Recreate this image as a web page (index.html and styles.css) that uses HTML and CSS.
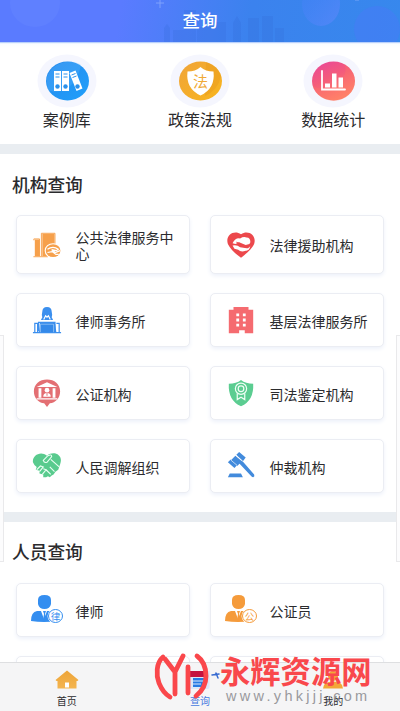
FILE: index.html
```html
<!DOCTYPE html>
<html lang="zh-CN">
<head>
<meta charset="utf-8">
<title>查询</title>
<link rel="stylesheet" href="styles.css">
</head>
<body>
<div class="app">
  <header class="header">
    <svg class="header-art" viewBox="0 0 400 42" preserveAspectRatio="none">
      <defs>
        <linearGradient id="bubble" x1="0" y1="0" x2="1" y2="1"><stop offset="0" stop-color="#477fff" stop-opacity=".2"/><stop offset="1" stop-color="#5f88fb" stop-opacity=".65"/></linearGradient>
      </defs>
      <ellipse cx="35" cy="3" rx="25" ry="24" fill="#7491ff" opacity=".22"/>
      <ellipse cx="321" cy="4" rx="19" ry="22" fill="url(#bubble)"/>
      <ellipse cx="377" cy="29" rx="23" ry="23" fill="#4779f7" opacity=".5"/>
      <path d="M156 3h8M160 0v8M355 0h4" stroke="#9db9ff" opacity=".6"/>
      <path d="M164 42V28l3-4 3 4v14M173 42V30h11V10h12v32M197 42V27h9v-5h20v20M233 42V23l4-7 4 7v19M248 42V18h11v24M262 42V16h11v26M275 42V28h9v14" fill="#3469d8" opacity=".22"/>
    </svg>
    <h1>查询</h1>
  </header>

  <main class="content">
    <nav class="shortcuts">
      <div class="shortcut">
        <svg width="60" height="54" viewBox="0 0 60 54">
          <defs><linearGradient id="blue" x1="0" y1="0" x2="1" y2="1"><stop offset="0" stop-color="#2589ec"/><stop offset="1" stop-color="#20a0fb"/></linearGradient></defs>
          <ellipse cx="30" cy="27" rx="29.5" ry="26.5" fill="#f5f6fe"/>
          <ellipse cx="30.500" cy="27" rx="21.500" ry="19.500" fill="url(#blue)"/>
          <path d="M11 36C20 40 38 38 44 11 34 4 13 8 9.500 25z" fill="#65b9ff" opacity=".3"/>
          <path d="M17 17h7v20h-7zM25 17h7v20h-7zM32.500 19l6-2.500 7 18-6 2.500z" fill="#fff"/>
          <path d="M18.500 20h4m-4 3h4M26.500 20h4m-4 3h4M34.500 21l4-1.500m-3 4l4-1.500" stroke="#2b91eb" stroke-width="1"/>
          <circle cx="20.500" cy="32.500" r="2.200" fill="#2b91eb"/><circle cx="28.500" cy="32.500" r="2.200" fill="#2b91eb"/><circle cx="40.500" cy="32.500" r="2.200" fill="#2b91eb"/>
        </svg>
        <span>案例库</span>
      </div>
      <div class="shortcut">
        <svg width="60" height="54" viewBox="0 0 60 54">
          <defs><linearGradient id="gold" x1="0" y1="0" x2="1" y2="1"><stop offset="0" stop-color="#f0a43a"/><stop offset="1" stop-color="#f8b51c"/></linearGradient></defs>
          <ellipse cx="30" cy="27" rx="29.500" ry="26.500" fill="#f5f6fe"/>
          <ellipse cx="30.500" cy="27" rx="21.500" ry="19.500" fill="url(#gold)"/>
          <path d="M36 8q12 4 15 14-3 14-16 20z" fill="#e99b1c" opacity=".5"/>
          <path d="M30.500 13q5 4.500 13 4.500 2 17-13 24-15-7-13-24 8 0 13-4.500z" fill="#fff"/>
          <text x="30.500" y="32.500" text-anchor="middle" class="shield-text">法</text>
        </svg>
        <span>政策法规</span>
      </div>
      <div class="shortcut">
        <svg width="60" height="54" viewBox="0 0 60 54">
          <defs><linearGradient id="pink" x1="0" y1="0" x2=".5" y2="1"><stop offset="0" stop-color="#e8459b"/><stop offset=".5" stop-color="#f45c7b"/><stop offset="1" stop-color="#ff8669"/></linearGradient></defs>
          <ellipse cx="30" cy="27" rx="29.500" ry="26.500" fill="#f5f6fe"/>
          <ellipse cx="30.500" cy="27" rx="21.500" ry="19.500" fill="url(#pink)"/>
          <path d="M10 32Q29 42 41 22q3-7 0-12 10 6 11 17-2 18-21 20-16-1-21-15z" fill="#ff7666" opacity=".35"/>
          <path d="M19 17v18.500h23" fill="none" stroke="#fff" stroke-width="1.800" stroke-linecap="round"/>
          <path d="M22 29.500h5v4h-5zM29 19.500h4.500v14H29zM35.500 23.500h4.500v10h-4.500z" fill="#fff"/>
        </svg>
        <span>数据统计</span>
      </div>
    </nav>

    <section class="section">
      <h2>机构查询</h2>
      <div class="grid">
        <div class="card tall">
          <svg class="icon" viewBox="0 0 32 32" fill="#f6a04b">
            <path d="M3 10h5v18H3zM11 4h13v12q-8 0-8 8v4h-5z"/>
            <path d="M1.500 28.500H17M2 11V9.500h6V28M10 28V3.500h14.500V15" fill="none" stroke="#f6a04b"/>
            <ellipse cx="22.500" cy="22" rx="9" ry="8" fill="#fff"/><ellipse cx="22.500" cy="22" rx="7.800" ry="6.800"/>
            <path d="M16.500 20.500q6-4 11.500 0l-2 1.500-5-1 4 3 5-2M16.500 24l5-1 4 3h3" fill="none" stroke="#fff" stroke-width="1.300"/>
          </svg>
          <span>公共法律服务中心</span>
        </div>
        <div class="card tall">
          <svg class="icon" viewBox="0 0 32 32">
            <path d="M16 29.500Q6 23 2 15C-1 6 8-.5 16 4.500 24-.5 33 6 30 15 26 23 16 29.500 16 29.500z" fill="#ec484c"/>
            <path d="M7 14q3-6 8-5 4-2.500 7-1 4 0 4 5l-1 2-4 1-7-3-4 2z" fill="#fff"/>
            <path d="M7 16.500q5-1 8 2l7 1q3 0 4-3-1 6-5 5.500-5 2-8-1l-4-1z" fill="#fff"/>
            <path d="M11 13l3 1 5 4" fill="none" stroke="#ec484c"/>
          </svg>
          <span>法律援助机构</span>
        </div>
        <div class="card">
          <svg class="icon" viewBox="0 0 32 32">
            <path d="M11 7q0-5 5-5t5 5q1 4 0 6l1.500 3h-13L11 13q-1-2 0-6z" fill="#3b8fee"/>
            <path d="M12.500 15.500l2-4 1.500 1.500 1.500-1.500 2 4" fill="none" stroke="#fff" stroke-width="1.200"/>
            <path d="M8.500 18.500h15q1 0 1 1L26 29H7.500z" fill="#3489e9"/>
            <path d="M1 29.500h30M3 29V19.500h3V29M29 29v-9.500h-3M7 28V18.500h17.500V28" fill="none" stroke="#3b8fee" stroke-width="1.300"/>
            <path d="M9 29V20.500h14V29" fill="none" stroke="#d9ebff" stroke-width=".5"/>
          </svg>
          <span>律师事务所</span>
        </div>
        <div class="card">
          <svg class="icon" viewBox="0 0 32 32">
            <path d="M8 2h16v3h5v25h-9v-3h-6v3H3V5h5z" fill="#f56b70"/>
            <path d="M11 9h3v3h-3zm7 0h3v3h-3zm-7 5.500h3v3h-3zm7 0h3v3h-3zm-7 5.500h3v3h-3zm7 0h3v3h-3z" fill="#fff"/>
          </svg>
          <span>基层法律服务所</span>
        </div>
        <div class="card">
          <svg class="icon" viewBox="0 0 32 32">
            <path d="M16 1.500c8 0 14 5 14 12.500s-5 12-11 13L16 31l-3-4C7 26 2 21.500 2 14S8 1.500 16 1.500z" fill="#e36f73"/>
            <path d="M5 9.500L16 4.500l11 5zM7 11h3v10H7zm15 0h3v10h-3zM5 21.500h22V23H5z" fill="#fff"/>
            <circle cx="16" cy="13" r="2.500" fill="#fff"/><path d="M12 20q0-4 4-4t4 4z" fill="#fff"/><path d="M16 16v3" stroke="#e36f73"/>
          </svg>
          <span>公证机构</span>
        </div>
        <div class="card">
          <svg class="icon" viewBox="0 0 32 32">
            <path d="M16 2q5 4 13 4 1 18-13 24Q2 24 3 6q8 0 13-4z" fill="#5bcd91"/>
            <g fill="none" stroke="#effff5" stroke-width="1.300"><circle cx="16" cy="11.500" r="6"/><circle cx="16" cy="11.500" r="3"/><path d="M12 16.500V23l4-2.500 4 2.500v-6.500"/></g>
          </svg>
          <span>司法鉴定机构</span>
        </div>
        <div class="card">
          <svg class="icon" viewBox="0 0 32 32">
            <path d="M16 5C9-1 0 5 1 12q1 3 4 5l-1 3 4 1v3l4 1v3h3l2-1 2 1 2-2 2-1 2-3 3-2 1-3 1-3C34 4 23-1 16 5z" fill="#59cb8e"/>
            <path d="M12 10l5-5q4-2 4 1l-5 6q-3 1-4-2zM20 9l9 8M5 20l4-4 3 1-4 5M12 19l3 1-4 5M19 17l5 5M15 20l5 5" fill="none" stroke="#eafff3" stroke-width="1.200"/>
          </svg>
          <span>人民调解组织</span>
        </div>
        <div class="card">
          <svg class="icon" viewBox="0 0 32 32">
            <g fill="#438bdc"><path d="M11 4l3-3 7 6-3 4zM2 12l3-3 7 6-3 3zM10 5l7 6-5 5-7-6zM14 13l3-3 13 15q1 2-1 3-1 0-2-1zM4 24h12l2 4H2z"/></g>
            <path d="M10.500 4.500l7.500 6.500M5 9.500l7 6" stroke="#fff" stroke-width=".7"/>
          </svg>
          <span>仲裁机构</span>
        </div>
      </div>
    </section>

    <section class="section people">
      <h2>人员查询</h2>
      <div class="grid">
        <div class="card">
          <svg class="icon person" viewBox="0 0 34 32" fill="#348ef0">
            <path d="M8 6q0-5 6.500-5T21 6v4q-1 5-6.500 5T8 10zM1 27q0-9 6-10h4l3 8 3-8h4q6 1 6 10-13 2-26 0z"/><path d="M13 17h3l-1 3 1 6h-3l1-6z"/>
            <ellipse cx="25.500" cy="22" rx="8" ry="7.500" fill="#fff"/><ellipse cx="25.500" cy="22" rx="7" ry="6.500" fill="#fff" stroke="#348ef0"/>
            <text x="25.500" y="25.500" text-anchor="middle" class="badge-text">律</text>
          </svg>
          <span>律师</span>
        </div>
        <div class="card">
          <svg class="icon person" viewBox="0 0 34 32" fill="#f59b3b">
            <path d="M8 6q0-5 6.500-5T21 6v4q-1 5-6.500 5T8 10zM1 27q0-9 6-10h4l3 8 3-8h4q6 1 6 10-13 2-26 0z"/><path d="M13 17h3l-1 3 1 6h-3l1-6z"/>
            <ellipse cx="25.500" cy="22" rx="8" ry="7.500" fill="#fff"/><ellipse cx="25.500" cy="22" rx="7" ry="6.500" fill="#fff" stroke="#f59b3b"/>
            <text x="25.500" y="25.500" text-anchor="middle" class="badge-text">公</text>
          </svg>
          <span>公证员</span>
        </div>
        <div class="card"></div>
        <div class="card"></div>
      </div>
    </section>
  </main>

  <nav class="tabs">
    <div class="tab">
      <svg width="24" height="22" viewBox="0 0 24 22"><defs><linearGradient id="house" x1="0" y1="0" x2="0" y2="1"><stop offset="0" stop-color="#eda438"/><stop offset="1" stop-color="#f4b550"/></linearGradient></defs><path d="M12 .5L23.500 10l-1 1h-1v7.500H2.500V11h-1l-1-1z" fill="url(#house)"/><path d="M10 12.500h4v5h-4z" fill="#fff"/></svg>
      <span>首页</span>
    </div>
    <div class="tab active">
      <svg width="24" height="22" viewBox="0 0 24 22"><path d="M1.500 3q0-2 2-2h18v16q0 2-2 2h-16q-2 0-2-2z" fill="#dce8f8"/><path d="M5 8h13l-2 9H5z" fill="#267be4"/><path d="M5 11h12M5 14h8" stroke="#dceafb"/></svg>
      <span>查询</span>
    </div>
    <div class="tab">
      <svg width="24" height="22" viewBox="0 0 24 22" fill="#f3a738"><circle cx="12" cy="6" r="5"/><path d="M2 18.500q0-7 10-7t10 7z"/></svg>
      <span>我的</span>
    </div>
  </nav>

  <div class="edge edge-left"></div>
  <div class="edge edge-right"></div>

  <div class="watermark">
    <svg width="65" height="52" viewBox="0 0 65 52" fill="none" stroke-linecap="round" stroke-linejoin="round">
      <path d="M34 18h16v6H34z" fill="#c41440"/>
      <path d="M57 22l7-1m-3-1l2 5" stroke="#376bd1" stroke-width="1.500"/>
      <g stroke="#fa474b" stroke-width="4.800">
        <path d="M8 4C1 10 1 22 4 30q4 10 11 14M10 6l10 13L28 3M20 19v22M33 14v26M42 3c7 5 9 13 9 20 0 9-5 16-10 20"/>
      </g>
    </svg>
    <div class="watermark-words"><strong>永辉资源网</strong><span>www.yhkjjj.com</span></div>
  </div>
</div>
</body>
</html>
```
FILE: styles.css
```css
* { box-sizing: border-box; }
body {
  margin: 0;
  background: #fff;
  color: #2b2b2e;
  font-family: "Noto Sans CJK SC", sans-serif;
}
.app {
  position: relative;
  display: flex;
  flex-direction: column;
  width: 400px;
  height: 711px;
  overflow: hidden;
}
.header {
  position: relative;
  flex: 0 0 42px;
  display: flex;
  justify-content: center;
  align-items: center;
  background: linear-gradient(100deg, #5a7bff 0 30%, #3b82ee 62%, #3788ed);
  box-shadow: 0 1px 1px #b9d1fb;
}
.header-art { position: absolute; inset: 0; width: 100%; height: 100%; }
.header h1 {
  position: relative;
  margin: 0;
  color: #fff;
  font-size: 17.5px;
  font-weight: 500;
  line-height: 40px;
  padding-bottom: 2px;
}
.content { flex: 1; min-height: 0; overflow: hidden; }
.shortcuts {
  display: grid;
  grid-template-columns: repeat(3, 1fr);
  height: 102px;
  padding-top: 12px;
  background: linear-gradient(#f7fcff, #fff 6px);
}
.shortcut { display: flex; flex-direction: column; align-items: center; }
.shortcut span { font-size: 16px; line-height: 22px; }
.shield-text { fill: #f0aa38; font-size: 15px; }
.section { padding: 15px 16px 0; border-top: 10px solid #e9edf1; }
.section h2 {
  margin: 0 0 16px -4px;
  font-size: 17.7px;
  font-weight: 500;
  line-height: 30px;
}
.grid { display: grid; grid-template-columns: 174px 174px; gap: 19px 20px; }
.card {
  display: flex;
  align-items: center;
  gap: 13.5px;
  height: 54px;
  padding: 0 14px 0 15px;
  border: 1px solid #ebedf3;
  border-radius: 5px;
  background: #fff;
  box-shadow: 0 2px 4px #edf1fa;
}
.card.tall { height: 59px; }
.card span { font-size: 14px; line-height: 16px; padding-top: 1px; }
.icon { flex: 0 0 30px; height: 30px; }
.person { flex-basis: 34px; height: 32px; margin: 0 -2px 0 -2px; }
.badge-text { font-size: 9.5px; }
.people { margin-top: 19px; padding-top: 14px; }
.people h2 { margin-bottom: 17px; }
.tabs {
  flex: 0 0 49px;
  display: grid;
  grid-template-columns: repeat(3, 1fr);
  background: #f5f5f6;
  border-top: 1px solid #dedfe1;
}
.tab {
  display: flex;
  flex-direction: column;
  align-items: center;
  padding-top: 7px;
}
.tab span { font-size: 10px; line-height: 16px; margin-top: 1px; }
.active { color: #477ae0; }
.edge {
  position: absolute;
  top: 335px;
  width: 4px;
  height: 227px;
  border: 1px solid #e9e9eb;
  background: #fcfcfd;
}
.edge-left { left: 0; border-left: 0; }
.edge-right { right: 0; border-right: 0; }
.watermark {
  position: absolute;
  left: 155px;
  top: 653px;
  display: flex;
}
.watermark svg { overflow: visible; }
.watermark-words { display: flex; flex-direction: column; }
.watermark strong {
  color: #f9484c;
  font-size: 30.3px;
  font-weight: 700;
  line-height: 34px;
  white-space: nowrap;
}
.watermark-words span {
  margin: 1px 0 0 6px;
  color: #99999d;
  font: 14.5px/16px "Liberation Sans", sans-serif;
  letter-spacing: 3.3px;
}
```
